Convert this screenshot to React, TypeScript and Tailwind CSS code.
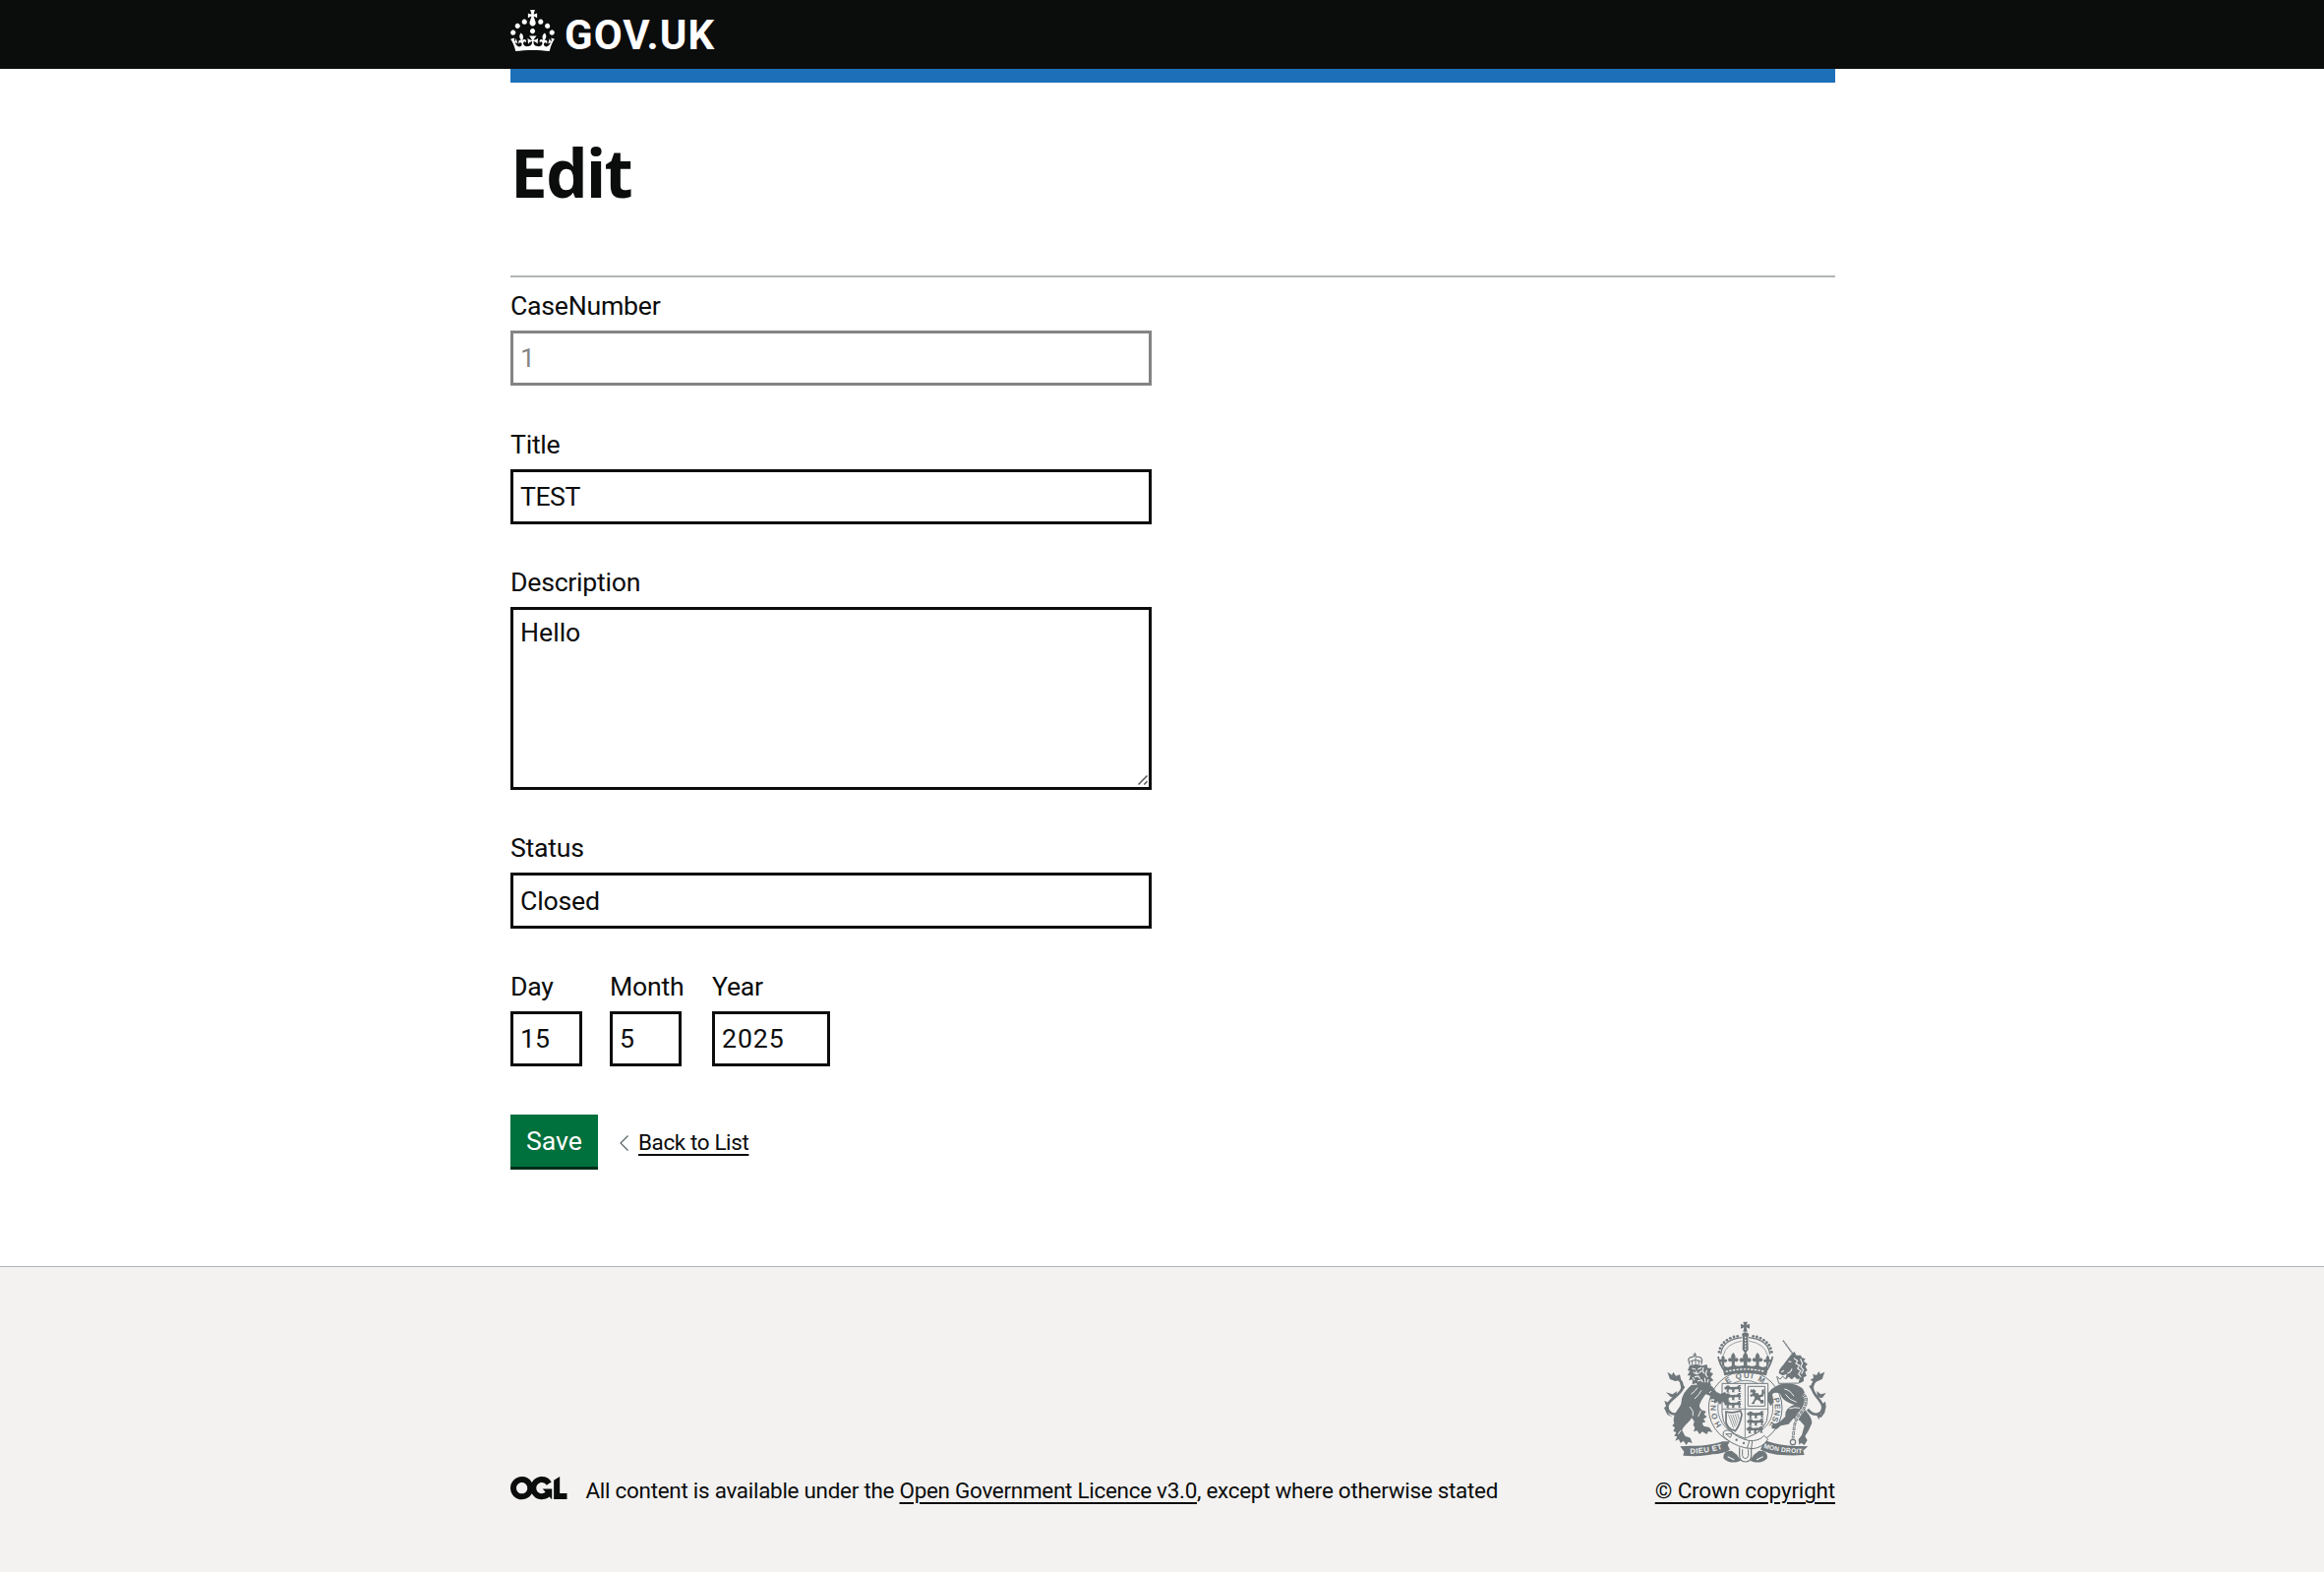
import type { ReactNode } from "react";

const CROWN =
  "M22.6 10.4c-1 .4-2-.1-2.4-1-.4-.9.1-2 1-2.4.9-.4 2 .1 2.4 1s-.1 2-1 2.4m-5.9 6.7c-.9.4-2-.1-2.4-1-.4-.9.1-2 1-2.4.9-.4 2 .1 2.4 1s-.1 2-1 2.4m10.8-3.7c-1 .4-2-.1-2.4-1-.4-.9.1-2 1-2.4.9-.4 2 .1 2.4 1s0 2-1 2.4m3.3 4.8c-1 .4-2-.1-2.4-1-.4-.9.1-2 1-2.4.9-.4 2 .1 2.4 1s-.1 2-1 2.4M17 4.7l2.3 1.2V2.5l-2.3.7-.2-.2.9-3h-3.4l.9 3-.2.2c-.1.1-2.3-.7-2.3-.7v3.4L15 4.7c.1.1.1.2.2.2l-1.3 4c-.1.2-.1.4-.1.6 0 1.1.8 2 1.9 2.2h.7c1-.2 1.9-1.1 1.9-2.1 0-.2 0-.4-.1-.6l-1.3-4c-.1-.2 0-.2.1-.3m-7.6 5.7c.9.4 2-.1 2.4-1 .4-.9-.1-2-1-2.4-.9-.4-2 .1-2.4 1s0 2 1 2.4m-5 3c.9.4 2-.1 2.4-1 .4-.9-.1-2-1-2.4-.9-.4-2 .1-2.4 1s.1 2 1 2.4m-3.2 4.8c.9.4 2-.1 2.4-1 .4-.9-.1-2-1-2.4-.9-.4-2 .1-2.4 1s0 2 1 2.4m14.8 11c4.4 0 8.6.3 12.3.8 1.1-4.5 2.4-7 3.7-8.8l-2.5-.9c.2 1.3.3 1.9 0 2.7-.4-.4-.8-1.1-1.1-2.3l-1.2 4c.7-.5 1.3-.8 2-.9-1.1 2.5-2.6 3.1-3.5 3-1.1-.2-1.7-1.2-1.5-2.1.3-1.2 1.5-1.5 2.1-.1 1.1-2.3-.8-3-2-2.3 1.9-1.9 2.1-3.5.6-5.6-2.1 1.6-2.1 3.2-1.2 5.5-1.2-1.4-3.2-.6-2.5 1.6.9-1.4 2.1-.5 1.9.8-.2 1.1-1.7 2.1-3.5 1.9-2.7-.2-2.9-2.1-2.9-3.6.7-.1 1.9.5 2.9 1.9l.4-4.3c-1.1 1.1-2.1 1.4-3.2 1.4.4-1.2 2.1-3 2.1-3h-5.4s1.7 1.9 2.1 3c-1.1 0-2.1-.2-3.2-1.4l.4 4.3c1-1.4 2.2-2 2.9-1.9-.1 1.5-.2 3.4-2.9 3.6-1.9.2-3.4-.8-3.5-1.9-.2-1.3 1-2.2 1.9-.8.7-2.3-1.2-3-2.5-1.6.9-2.2.9-3.9-1.2-5.5-1.5 2-1.3 3.7.6 5.6-1.2-.7-3.1 0-2 2.3.6-1.4 1.8-1.1 2.1.1.2.9-.3 1.9-1.5 2.1-.9.2-2.4-.5-3.5-3 .6 0 1.2.3 2 .9l-1.2-4c-.3 1.1-.7 1.9-1.1 2.3-.3-.8-.2-1.4 0-2.7l-2.9.9C1.3 23 2.6 25.5 3.7 30c3.7-.5 7.9-.8 12.3-.8";

const OGL =
  "M421.5 142.8V.1l-50.7 32.3v161.1h112.4v-50.7zm-122.3-9.6A47.12 47.12 0 0 1 221 97.8c0-26 21.1-47.1 47.1-47.1 16.7 0 31.4 8.7 39.7 21.8l42.7-27.2A97.63 97.63 0 0 0 268.1 0c-36.5 0-68.3 20.1-85.1 49.7A98 98 0 0 0 97.8 0C43.9 0 0 43.9 0 97.8s43.9 97.8 97.8 97.8c36.5 0 68.3-20.1 85.1-49.7a97.76 97.76 0 0 0 149.6 25.4l19.4 22.2h3v-87.8h-80l24.3 27.5zM97.8 145c-26 0-47.1-21.1-47.1-47.1s21.1-47.1 47.1-47.1 47.1 21.1 47.1 47.1S123.8 145 97.8 145";

const INPUT =
  "block h-[56.3px] border-[3px] border-[#0b0c0c] bg-white px-[7px] text-[26.66px] leading-[35px] outline-none";

function Field({ label, className, children }: { label: string; className?: string; children: ReactNode }) {
  return (
    <label className={className}>
      <span className="mb-2 block h-9 pt-0.5 leading-[34px] tracking-[-0.25px] whitespace-nowrap">{label}</span>
      {children}
    </label>
  );
}

/* A walking lion of the shield's English quarters, about 55 x 22 units. */
function Passant({ x, y }: { x: number; y: number }) {
  return (
    <path
      transform={`translate(${x} ${y})`}
      d="M2 8l7-5 6 1 3 4 20-1 6-5 9 1-6 3 4 5-4 8 5 3-9 1 0-8-11 0-3 6 4 3-10 0 1-8-9-1-3 6 5 4-11-1 2-9-6 2 1-4-5-1z"
    />
  );
}

/* A fleur-de-lis on the rim of the crown, centred on its cross bar. */
function Fleur({ x, y, scale = 1 }: { x: number; y: number; scale?: number }) {
  return (
    <path
      transform={`translate(${x} ${y}) scale(${scale})`}
      d="M-4 24L-5 9Q-14 14-16 4-13-4-6 0-9-8 0-17 9-8 6 0 13-4 16 4 14 14 5 9L4 24z"
    />
  );
}

function RoyalArms({ className }: { className: string }) {
  const dots = [
    [238, 133], [241, 122], [246, 112], [253, 104], [262, 97], [272, 91], [283, 87], [294, 85],
    [342, 85], [353, 87], [364, 91], [374, 97], [383, 104], [390, 112], [395, 122], [398, 133],
  ];
  return (
    <svg viewBox="70 36 495 438" className={className} fill="#6f777b" role="img" aria-label="Royal coat of arms">
      <defs>
        <path id="garter" d="M255 367A90 90 0 1 1 381 367" />
        <path id="scrollLeft" d="M149 443Q205 442 250 427" />
        <path id="scrollRight" d="M373 425Q425 442 500 442" />
      </defs>

      {/* Garter and shield */}
      <circle cx="318" cy="304" r="112" fill="#f3f2f1" stroke="#6f777b" strokeWidth="3" />
      <circle cx="318" cy="304" r="84" fill="none" stroke="#6f777b" strokeWidth="2.5" />
      <g fontFamily="Liberation Sans, sans-serif" fontSize="24" fontWeight="700">
        <text>
          <textPath href="#garter" startOffset="14" textLength="78">HONI</textPath>
        </text>
        <text>
          <textPath href="#garter" startOffset="154" textLength="115">E QUI M</textPath>
        </text>
        <text>
          <textPath href="#garter" startOffset="300" textLength="112">Y PENSE</textPath>
        </text>
      </g>
      <path d="M247 229h140v90q0 54-70 78-70-24-70-78z" fill="#f3f2f1" stroke="#6f777b" strokeWidth="3" />
      <path d="M317 229v168M248 307h138" stroke="#6f777b" strokeWidth="2.5" />
      <Passant x={254} y={232} />
      <Passant x={254} y={256} />
      <Passant x={254} y={280} />
      <Passant x={323} y={311} />
      <Passant x={323} y={334} />
      <Passant x={321} y={357} />
      <path d="M326 238h52v60h-52z" fill="none" stroke="#6f777b" strokeWidth="3" />
      <path d="M334 246l6 4 2-5 8 6-2 8 8-1 4 7 8-3 0-12 6-5 2 12-4 12-9 2 2 8 8 0 1 10-8 2-5-9-8-4-6 6-2 8-9-1 7-9 4-10-4-5-8 3-4-6 8-3 1-5-7 1z" />
      <path d="M259 315q20 6 44-3l4 12q-5 32-20 50-6-4-8-3-15-6-20-24z" fill="none" stroke="#6f777b" strokeWidth="5" />
      <path d="M266 323l16 42M273 324l14 37M280 324l11 32M287 323l8 26M294 321l5 18" stroke="#6f777b" strokeWidth="2" />

      {/* Imperial crown */}
      <path d="M311 41h14l-4 10 10-4v15l-10-4 3 13h-13l3-13-10 4V47l10 4z" />
      <path d="M307 78q11-10 22 0l-3 12 1 36-9 12-9-12 1-36z" />
      <path d="M318 86v40" stroke="#f3f2f1" strokeWidth="4" strokeDasharray="5 4" />
      <path d="M243 140q5-45 65-51M393 140q-5-45-65-51" fill="none" stroke="#6f777b" strokeWidth="3.5" />
      <path d="M251 143q7-35 57-44M385 143q-7-35-57-44" fill="none" stroke="#6f777b" strokeWidth="2" />
      {dots.map(([cx, cy]) => (
        <circle key={`${cx}-${cy}`} cx={cx} cy={cy} r="4.2" />
      ))}
      <path d="M236 148Q318 128 400 148 396 174 384 202 318 187 252 202 240 174 236 148z" fill="#f3f2f1" />
      <Fleur x={318} y={152} scale={1.15} />
      <Fleur x={281} y={152} />
      <Fleur x={355} y={152} />
      <Fleur x={250} y={156} scale={0.8} />
      <Fleur x={386} y={156} scale={0.8} />
      <path d="M235 147Q240 172 254 190M401 147Q396 172 382 190" fill="none" stroke="#6f777b" strokeWidth="5" />
      <path d="M250 172Q266 188 281 170 300 184 318 170 336 184 355 170 370 188 386 172L384 190Q318 172 252 190z" />
      <path d="M249 184Q318 166 387 184L382 205Q318 190 254 205z" />
      <path d="M258 193Q318 178 378 193" fill="none" stroke="#f3f2f1" strokeWidth="4" strokeDasharray="7 4" />

      {/* Lion */}
      <path d="M148 172L144 156Q148 147 158 148L164 145 170 148Q182 146 186 157L184 171" fill="none" stroke="#6f777b" strokeWidth="3.5" />
      <path d="M155 172L157 158M166 170V150M176 171L175 157M147 163Q166 153 184 163M158 141h11M164 135v12" fill="none" stroke="#6f777b" strokeWidth="3" />
      <path d="M148 174L142 190 149 191 141 205 150 205 146 220 157 217 156 232 168 228 176 240 184 232 196 242 202 234 214 236 210 224 221 220 212 210 220 199 210 194 215 182 203 182 201 171 186 175 168 170z" />
      <path d="M155 183L166 186M173 186L184 181M159 194Q168 204 178 196L184 190M163 209L174 207 180 214M190 180L187 192 194 199M200 188L197 202 203 210M157 210L163 219M172 222L184 218 188 226M194 212L196 226M168 190L169 198M205 216L203 226" stroke="#f3f2f1" strokeWidth="3.5" fill="none" />
      <path d="M153 234C136 250 124 264 123 285 121 300 112 305 106 318 98 332 98 342 101 350L95 358 103 364 98 374 107 378 101 390 110 390 104 404 115 399 120 411 129 404 138 417 144 407 156 411 150 395 134 389 125 372C129 358 146 350 154 334L162 344 159 356 164 364 160 376 171 373 178 384 187 376 200 384 205 375 218 378 208 363 191 359 186 350 197 346 190 338 201 330 192 324 198 314 184 310 178 300C178 290 186 276 197 262L210 266 212 278 222 276 224 290 234 284 241 294 248 284 258 291 267 284 263 274 280 268 262 263 256 255 242 261 229 254 218 239 204 230z" />
      <path d="M152 262Q164 254 172 242M163 276Q178 262 184 250M148 300Q162 312 158 328M182 312L174 330M121 372L113 384M214 252L208 258" stroke="#f3f2f1" strokeWidth="3" fill="none" />
      <path d="M112 320C94 328 79 314 80 298 83 277 127 262 126 238 125 221 113 210 96 214" fill="none" stroke="#6f777b" strokeWidth="8" />
      <path d="M80 194L94 203 98 194 106 206 118 202 122 218 104 222 88 216z" />
      <path d="M76 256L96 262 110 252 104 274 90 270zM71 282L86 288 80 306 84 322 96 332 80 324 70 304 76 298zM118 224L134 240 124 254z" />

      {/* Unicorn */}
      <path d="M433 98L463 139" stroke="#6f777b" strokeWidth="4.5" strokeDasharray="5 1.2" />
      <path d="M458 140L468 132 473 143 487 143 490 150 501 154 496 161 508 170 501 177 507 189 500 194 505 206 496 210 496 222 484 228 478 214 440 216 444 200 432 205 421 199C418 188 428 180 434 172L444 158z" />
      <path d="M449 162L458 163M427 194L436 190M466 152L477 160 472 168 483 174 477 183 487 190 480 200 488 210M486 154L492 168 487 178 495 188 489 200M460 184Q456 196 446 198" stroke="#f3f2f1" strokeWidth="3.5" fill="none" />
      <path d="M414 236C430 224 472 226 492 244 506 262 502 290 494 302 507 318 521 330 521 350L511 372 500 390 507 402 498 417 488 410 482 416 480 400 490 386 498 358 484 342 464 336 450 353 426 358 414 368 398 366 400 356 424 345 440 330C438 310 450 300 468 294 448 287 430 280 424 260L409 255 400 262 405 286 395 298 385 280 388 258 399 245z" />
      <path d="M414 208l10 8 8-9 9 9 9-9 9 9 9-9 9 9 8-6-3 18-62 1z" fill="#f3f2f1" stroke="#6f777b" strokeWidth="3" />
      <path d="M437 246Q456 250 466 268M452 306Q470 300 484 304M440 262Q452 280 474 286" stroke="#f3f2f1" strokeWidth="3" fill="none" />
      <path d="M494 262q15 9 8 31-7 19-21 32-11 17-14 37l-4 36" fill="none" stroke="#f3f2f1" strokeWidth="11" />
      <path d="M494 262q15 9 8 31-7 19-21 32-11 17-14 37l-4 36" fill="none" stroke="#6f777b" strokeWidth="8" strokeDasharray="11 3" />
      <path d="M494 262q15 9 8 31-7 19-21 32-11 17-14 37l-4 36" fill="none" stroke="#f3f2f1" strokeWidth="3" strokeDasharray="6 8" strokeDashoffset="-2.5" />
      <circle cx="463" cy="408" r="8" fill="#f3f2f1" stroke="#6f777b" strokeWidth="3.5" />
      <path d="M508 308C526 332 554 326 554 300 551 279 523 264 522 242 521 226 534 216 552 208" fill="none" stroke="#6f777b" strokeWidth="8" />
      <path d="M560 194L546 200 542 192 535 204 524 200 526 212 516 218 530 226 552 216zM564 258L548 262 536 252 538 270 552 274zM562 284L552 292 556 308 548 324 534 330 550 332 560 318 564 300zM530 226L512 238 522 252zM534 320L542 340 548 324z" />

      {/* Motto ribbon */}
      <path d="M119 421L150 419Q200 422 249 406L271 406 264 417 271 431Q250 444 218 445 190 452 143 450L128 449 131 437z" />
      <path d="M509 421L485 420Q430 422 378 403L361 405 370 417 364 431Q385 441 414 446 450 449 480 448L498 447 494 434z" />
      <path d="M262 436Q248 444 252 458 268 473 292 469L304 464 292 446 276 434zM374 436Q388 444 384 458 368 473 344 469L332 464 344 446 360 434z" />
      <path d="M264 452L284 462M372 452L352 462" stroke="#f3f2f1" strokeWidth="3.5" fill="none" />
      <path d="M300 424v27q1 17 18 17t18-17v-27" fill="#f3f2f1" stroke="#6f777b" strokeWidth="3.5" />
      <path d="M309 430v19q2 9 9 9t9-9v-19" fill="none" stroke="#6f777b" strokeWidth="3" />
      <path d="M251 377q10-10 23-1 20 19 53 27 32 4 48-15l12 11q-16 26-47 29-46-2-82-31-12-9-7-20z" fill="#f3f2f1" stroke="#6f777b" strokeWidth="3" />
      <path d="M258 383l14 11 5-11z" fill="none" stroke="#6f777b" strokeWidth="3" />
      <circle cx="291" cy="401" r="3.5" />
      <circle cx="313" cy="411" r="3.5" />
      <path d="M330 405l-7 22M339 405l-3 23" stroke="#6f777b" strokeWidth="3" />
      <g fill="#f3f2f1" fontFamily="Liberation Sans, sans-serif" fontSize="23" fontWeight="700">
        <text>
          <textPath href="#scrollLeft" textLength="100">DIEU ET</textPath>
        </text>
        <text fontSize="20">
          <textPath href="#scrollRight" textLength="120">MON DROIT</textPath>
        </text>
      </g>
    </svg>
  );
}

export default function App() {
  return (
    <div className="flex min-h-screen flex-col bg-white font-[Roboto,sans-serif] text-[26.66px] text-[#0b0c0c]">
      <header className="h-[70px] bg-[#0b0c0c]">
        <a href="#" className="ml-[519px] flex w-fit text-white">
          <svg viewBox="0 0 32 30" className="mt-[10px] h-[42px] w-[45px]" fill="currentColor" aria-hidden="true">
            <path d={CROWN} />
          </svg>
          <span className="ml-[10px] h-[70px] text-[42px] leading-[71px] font-bold tracking-[1.1px]">GOV.UK</span>
        </a>
      </header>

      <main className="ml-[519px] w-[1347px]">
        <div className="h-[14px] bg-[#1d70b8]" />
        <h1 className="mt-[56px] h-[70px] font-['Noto_Sans',sans-serif] text-[67.3px] leading-[70px] font-bold tracking-[-1.6px]">
          Edit
        </h1>
        <hr className="mt-[70px] border-t-2 border-[#b1b4b6]" />

        <form className="mt-[10px] flex w-[652px] flex-col gap-[40.3px]">
          <Field label="CaseNumber">
            <input className={`${INPUT} w-full opacity-50`} defaultValue="1" disabled />
          </Field>
          <Field label="Title">
            <input className={`${INPUT} w-full tracking-[-0.5px]`} defaultValue="TEST" />
          </Field>
          <Field label="Description" className="relative">
            <textarea
              className="block h-[186px] w-full resize-none border-[3px] border-[#0b0c0c] bg-white px-[7px] py-[6px] leading-[35px] outline-none"
              defaultValue="Hello"
            />
            <svg viewBox="0 0 10 10" className="absolute right-[4px] bottom-[5px] h-[10px] w-[10px]" aria-hidden="true">
              <path d="M.5 9.5l9-9M6.3 9.5l3.2-3.2" stroke="#555" strokeWidth="1.5" />
            </svg>
          </Field>
          <Field label="Status">
            <input className={`${INPUT} w-full tracking-[-0.2px]`} defaultValue="Closed" />
          </Field>
          <div className="flex">
            <Field label="Day" className="w-[101px]">
              <input className={`${INPUT} w-[73px]`} defaultValue="15" />
            </Field>
            <Field label="Month" className="w-[104px]">
              <input className={`${INPUT} w-[73px]`} defaultValue="5" />
            </Field>
            <Field label="Year">
              <input className={`${INPUT} w-[120px] tracking-[0.9px]`} defaultValue="2025" />
            </Field>
          </div>
          <div className="mt-[8px] flex items-start">
            <button
              type="button"
              className="h-[53px] w-[89px] bg-[#00703c] pt-[2px] leading-[51px] text-white shadow-[0_3px_0_#002d18]"
            >
              Save
            </button>
            <svg viewBox="0 0 10 16" className="mt-[21px] ml-[22px] h-4 w-[10px]" fill="none" aria-hidden="true">
              <path d="M8.5.5L1 8l7.5 7.5" stroke="#505a5f" strokeWidth="1.1" />
            </svg>
            <a
              href="#"
              className="mt-[13px] ml-[9px] text-[22.45px] leading-[30px] tracking-[-0.37px] underline decoration-[1.5px] underline-offset-[4px]"
            >
              Back to List
            </a>
          </div>
        </form>
      </main>

      <footer className="mt-[101px] grow border-t border-[#b1b4b6] bg-[#f3f2f1] text-[22.45px] tracking-[-0.27px]">
        <div className="ml-[519px] flex h-[242px] w-[1347px] items-end">
          <svg viewBox="0 0 483.2 195.7" className="mb-[5px] h-[23.3px] w-[57.5px]" fill="currentColor" aria-hidden="true">
            <path d={OGL} />
          </svg>
          <p className="ml-[19px] leading-[30px] whitespace-nowrap">
            All content is available under the{" "}
            <a href="#" className="underline decoration-[1.5px] underline-offset-[4px]">
              Open Government Licence v3.0
            </a>
            , except where otherwise stated
          </p>
          <a href="#" className="ml-auto flex flex-col items-center whitespace-nowrap">
            <RoyalArms className="h-[146px] w-[165px]" />
            <span className="mt-[12px] leading-[30px] tracking-[-0.15px] underline decoration-[1.5px] underline-offset-[4px]">
              © Crown copyright
            </span>
          </a>
        </div>
      </footer>
    </div>
  );
}
